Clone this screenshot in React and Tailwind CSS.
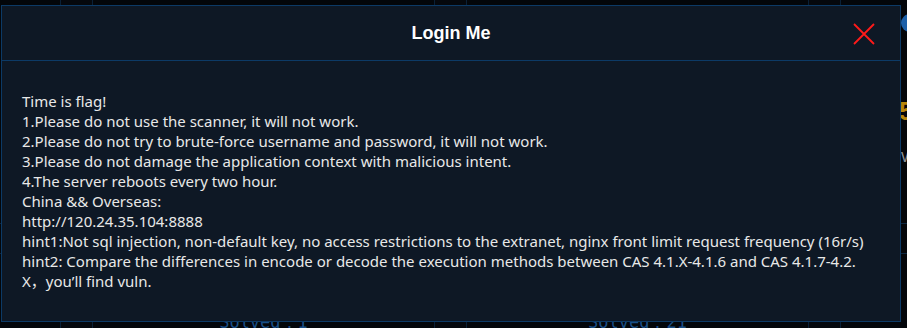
import React from 'react';

const cards = [
    { solved: 4, score: 500 },
    { solved: 1, score: 500 },
    { solved: 21, score: 300 },
    { solved: 7, score: 500 },
];

const rules = [
    'Time is flag!',
    '1.Please do not use the scanner, it will not work.',
    '2.Please do not try to brute-force username and password, it will not work.',
    '3.Please do not damage the application context with malicious intent.',
    '4.The server reboots every two hour.',
    'China && Overseas:',
    'http://120.24.35.104:8888',
    'hint1:Not sql injection, non-default key, no access restrictions to the extranet, nginx front limit request frequency (16r/s)',
];

const ChallengeCard = ({ solved, score }) => (
    <div className="w-[343px] shrink-0 h-[360px] border border-[#0a2036] bg-[#03060a] flex flex-col items-center">
        <div className="self-start ml-[60px] mt-[14px] w-[18px] h-[18px] rounded-full bg-[#1b5fa8]" />
        <div className="self-start ml-[58px] mt-[66px] text-[26px] font-bold leading-none text-[#b8860b]" style={{ fontFamily: '"Liberation Sans", sans-serif' }}>
            {score}
        </div>
        <div className="self-start ml-[60px] mt-[22px] text-[15px] text-[#8a8f98]" style={{ fontFamily: '"Liberation Sans", sans-serif' }}>
            Web
        </div>
        <div className="w-full mt-[54px] border-t border-[#0c2740]" />
        <div className="w-full mt-[29px] border-t border-[#0c2740]" />
        <div className="mt-[60px] text-[17px] leading-none text-[#1a4e85]" style={{ fontFamily: '"DejaVu Sans Mono", monospace' }}>
            Solved：{solved}
        </div>
    </div>
);

export default function App() {
    return (
        <div className="relative w-full h-[328px] overflow-hidden bg-[#05080d]">
            {/* Challenge board behind the dialog */}
            <div className="flex gap-[31px] ml-[-282px] mt-[-1px]">
                {cards.map((c, i) => (
                    <ChallengeCard key={i} {...c} />
                ))}
            </div>

            {/* Dialog */}
            <div className="absolute left-[1px] top-[5px] w-[900px] h-[317px] bg-[#0e1825] border border-[#0c3a66] flex flex-col">
                <div className="relative h-[55px] shrink-0 border-b border-[#0c3a66] flex items-center justify-center">
                    <h2 className="text-[18px] font-bold text-white" style={{ fontFamily: '"Liberation Sans", Arial, sans-serif' }}>
                        Login Me
                    </h2>
                    <button className="absolute right-[25px] top-[17px] w-[22px] h-[22px] flex items-center justify-center">
                        <svg width="22" height="22" viewBox="0 0 22 22">
                            <path d="M1 1 L21 21 M21 1 L1 21" stroke="#ff1a1a" strokeWidth="1.8" />
                        </svg>
                    </button>
                </div>
                <div
                    className="px-[20px] pt-[30px] text-[15px] leading-[20px] text-[#e8e8e8]"
                    style={{ fontFamily: '"Noto Sans", "Noto Sans CJK SC", "Open Sans", sans-serif' }}
                >
                    {rules.map((line) => (
                        <div key={line}>{line}</div>
                    ))}
                    <div>
                        hint2: Compare the differences in encode or decode the execution methods between CAS 4.1.X-4.1.6 and CAS 4.1.7-4.2.
                        <br />
                        X，you’ll find vuln.
                    </div>
                </div>
            </div>
        </div>
    );
}
